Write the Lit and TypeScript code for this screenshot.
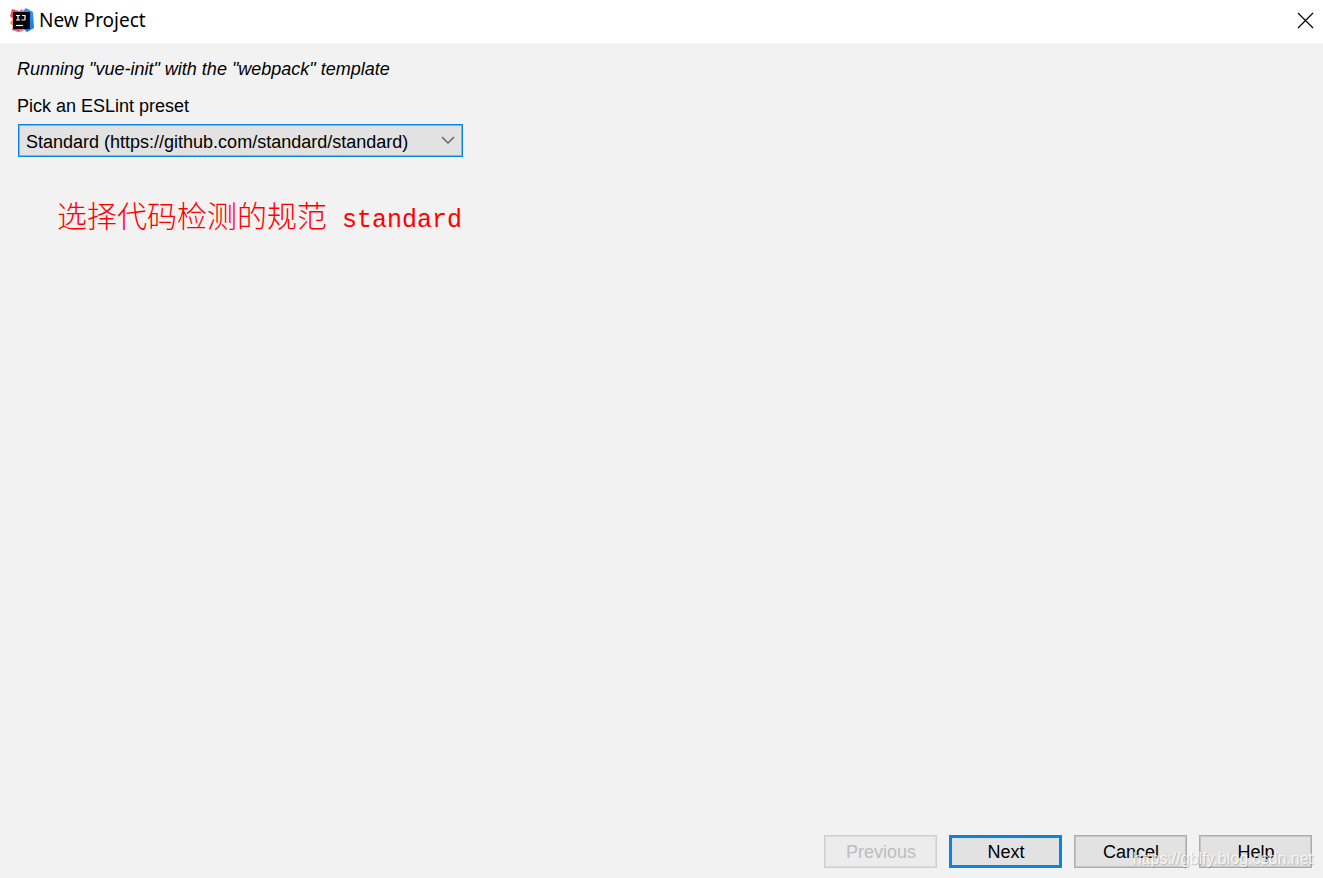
import { LitElement, html, css } from "lit";
import { customElement, state } from "lit/decorators.js";

@customElement("app-root")
export class AppRoot extends LitElement {
  static styles = css`
    :host {
      display: flex;
      flex-direction: column;
      min-height: 100vh;
      background: #f2f2f2;
      color: #000;
      font: 18px/22px "Liberation Sans", Arial, sans-serif;
    }
    * { box-sizing: border-box; }
    .titlebar {
      display: flex;
      align-items: center;
      gap: 5px;
      height: 43px;
      padding: 0 8px 2px 9px;
      background: #fff;
    }
    .title {
      flex: 1;
      margin: 0;
      padding-bottom: 2px;
      font: 400 19px/26px "Noto Sans", "Open Sans", sans-serif;
    }
    .close {
      display: flex;
      padding: 0;
      border: 0;
      background: none;
    }
    .logo, .close-icon, .chevron { display: block; }
    .content {
      flex: 1;
      padding: 15px 17px;
    }
    .status {
      margin: 0 0 15px;
      font-style: italic;
    }
    .field {
      display: flex;
      flex-direction: column;
      align-items: flex-start;
      gap: 7px;
    }
    .select-box {
      position: relative;
      width: 445px;
      max-width: 100%;
      margin-left: 1px;
    }
    .select {
      display: block;
      width: 100%;
      height: 33px;
      padding: 3px 32px 0 7px;
      border: 1px solid #0b84df;
      border-radius: 0;
      outline: 0;
      box-shadow: inset 0 0 0 1px #7db6e4;
      background: #e2e2e2;
      color: #000;
      font: inherit;
      appearance: none;
    }
    .chevron {
      position: absolute;
      right: 8px;
      top: 12px;
      pointer-events: none;
    }
    .note {
      margin: 37px 0 0 40px;
      color: #f00;
      font: 300 30px/40px "Noto Sans CJK SC", sans-serif;
    }
    .note-latin {
      margin-left: 15px;
      font: 400 25px/40px "Liberation Mono", monospace;
    }
    .footer {
      position: relative;
      display: flex;
      justify-content: flex-end;
      gap: 12px;
      padding: 0 11px 10px;
    }
    .btn {
      width: 113px;
      height: 33px;
      padding: 1px 0 0 1px;
      border: 1px solid #adadad;
      border-radius: 0;
      box-shadow: inset 0 0 0 1px #c4c4c4;
      background: #e2e2e2;
      color: #000;
      font: inherit;
    }
    .btn:disabled {
      border-color: #cfcfcf;
      box-shadow: inset 0 0 0 1px #dcdcdc;
      background: #ececec;
      color: #bdbdbd;
    }
    .primary {
      border: 3px solid #0b84df;
      box-shadow: none;
    }
    .watermark {
      position: absolute;
      right: 10px;
      bottom: 8px;
      color: rgba(255, 255, 255, 0.8);
      font-size: 16px;
      text-shadow: 1px 1px 1px rgba(0, 0, 0, 0.2);
      pointer-events: none;
    }
  `;

  @state() private preset = "standard";

  private pick(e: Event) {
    this.preset = (e.target as HTMLSelectElement).value;
  }

  render() {
    return html`
      <header class="titlebar">
        <svg class="logo" width="25" height="25" viewBox="0 0 25 25" aria-hidden="true">
          <defs>
            <linearGradient id="warm" x1="0" y1="0" x2="0" y2="1">
              <stop offset="0" stop-color="#fe4168" />
              <stop offset="0.4" stop-color="#fd4b58" />
              <stop offset="0.55" stop-color="#fb8b28" />
              <stop offset="0.72" stop-color="#fb8b28" />
              <stop offset="0.85" stop-color="#f9456c" />
            </linearGradient>
            <linearGradient id="cool" x1="0" y1="0" x2="0" y2="1">
              <stop offset="0" stop-color="#3294f5" />
              <stop offset="1" stop-color="#087cfa" />
            </linearGradient>
          </defs>
          <path d="M3 1 10 3 14 6V21L10 24 3 22 4 18 1 15 4 11 1 8Z" fill="url(#warm)" />
          <path d="M13 4 17 0 24 4 25 20 18 24 13 20Z" fill="url(#cool)" />
          <path d="M9 4 13 1 15 4ZM10 21H16L12 24Z" fill="#e9709c" />
          <rect x="4" y="4" width="17" height="17" fill="#050505" />
          <path d="M7 7.500H11M9 7.500V12M7 12H11M13 7.500H16.500M16 7.500V11Q16 12 15 12H12.500" fill="none" stroke="#fff" stroke-width="1.2" />
          <path d="M7 17.500H14" stroke="#fff" stroke-width="1.2" />
        </svg>
        <h1 class="title">New Project</h1>
        <button class="close" aria-label="Close">
          <svg class="close-icon" width="19" height="19" viewBox="0 0 19 19">
            <path d="M2 2 17 17M17 2 2 17" stroke="#000" stroke-width="1.2" />
          </svg>
        </button>
      </header>
      <main class="content">
        <p class="status">Running "vue-init" with the "webpack" template</p>
        <div class="field">
          <label for="preset">Pick an ESLint preset</label>
          <div class="select-box">
            <select class="select" id="preset" .value=${this.preset} @change=${this.pick}>
              <option value="standard">Standard (https://github.com/standard/standard)</option>
            </select>
            <svg class="chevron" width="14" height="9" viewBox="0 0 14 9" aria-hidden="true">
              <path d="M1 1 7 7 13 1" fill="none" stroke="#666" stroke-width="1.5" />
            </svg>
          </div>
        </div>
        <p class="note">选择代码检测的规范<span class="note-latin">standard</span></p>
      </main>
      <footer class="footer">
        <button class="btn" disabled>Previous</button>
        <button class="btn primary">Next</button>
        <button class="btn">Cancel</button>
        <button class="btn">Help</button>
        <span class="watermark">https://gblfy.blog.csdn.net</span>
      </footer>
    `;
  }
}
